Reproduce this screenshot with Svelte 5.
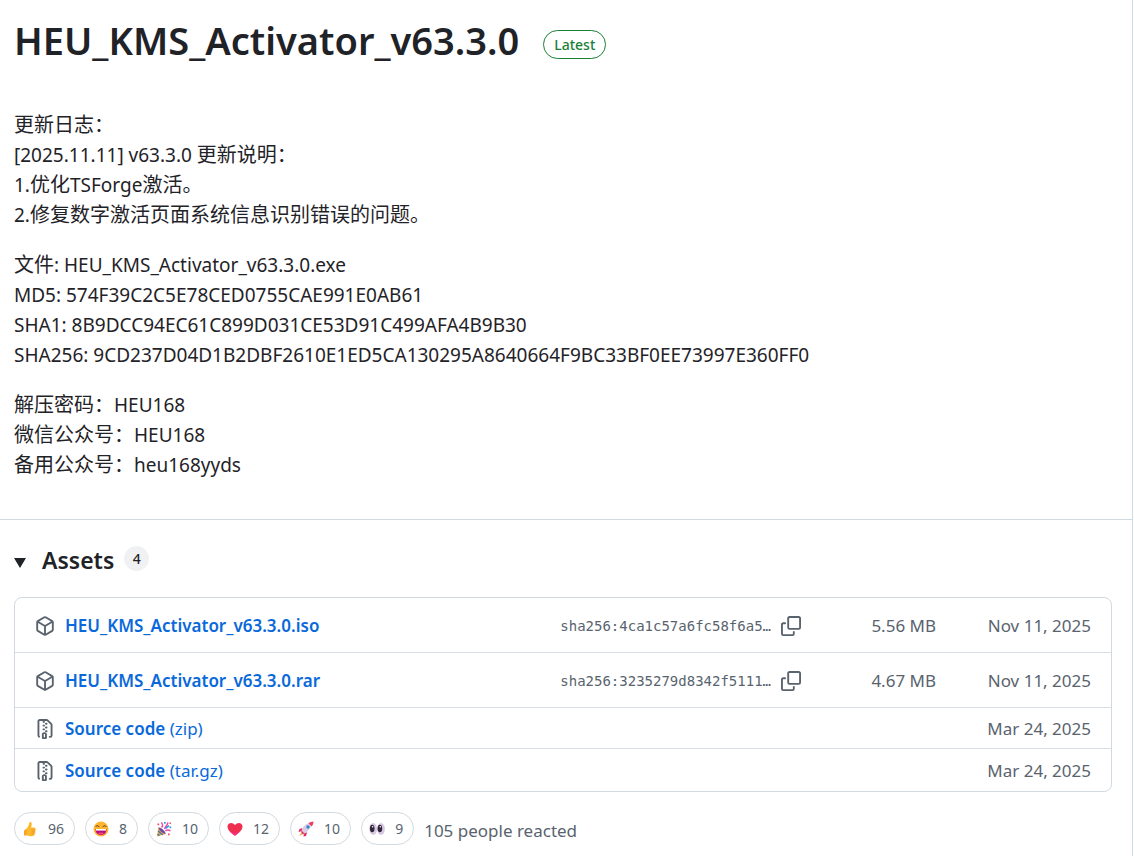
<script>
  const title = 'HEU_KMS_Activator_v63.3.0';

  // Each note is a list of lines, each line a list of text runs.
  // Latin runs are set slightly smaller than the Chinese ones.
  const notes = [
    [
      [{ zh: '更新日志：' }],
      [{ en: '[2025.11.11] v63.3.0 ' }, { zh: '更新说明：' }],
      [{ en: '1.' }, { zh: '优化' }, { en: 'TSForge' }, { zh: '激活。' }],
      [{ en: '2.' }, { zh: '修复数字激活页面系统信息识别错误的问题。' }]
    ],
    [
      [{ zh: '文件' }, { en: ': HEU_KMS_Activator_v63.3.0.exe' }],
      [{ en: 'MD5: 574F39C2C5E78CED0755CAE991E0AB61' }],
      [{ en: 'SHA1: 8B9DCC94EC61C899D031CE53D91C499AFA4B9B30' }],
      [{ en: 'SHA256: 9CD237D04D1B2DBF2610E1ED5CA130295A8640664F9BC33BF0EE73997E360FF0' }]
    ],
    [
      [{ zh: '解压密码：' }, { en: 'HEU168' }],
      [{ zh: '微信公众号：' }, { en: 'HEU168' }],
      [{ zh: '备用公众号：' }, { en: 'heu168yyds' }]
    ]
  ];

  const assets = [
    { name: 'HEU_KMS_Activator_v63.3.0.iso', sha: 'sha256:4ca1c57a6fc58f6a5…', size: '5.56 MB', date: 'Nov 11, 2025' },
    { name: 'HEU_KMS_Activator_v63.3.0.rar', sha: 'sha256:3235279d8342f5111…', size: '4.67 MB', date: 'Nov 11, 2025' },
    { name: 'Source code', ext: '(zip)', date: 'Mar 24, 2025' },
    { name: 'Source code', ext: '(tar.gz)', date: 'Mar 24, 2025' }
  ];

  const reactions = [
    { kind: 'thumbs up', count: 96 },
    { kind: 'laugh', count: 8 },
    { kind: 'hooray', count: 10 },
    { kind: 'heart', count: 12 },
    { kind: 'rocket', count: 10 },
    { kind: 'eyes', count: 9 }
  ];

  let open = $state(true);
</script>

<main class="release">
  <section class="body">
    <header>
      <h1>{title}</h1>
      <a class="latest" href="#latest">Latest</a>
    </header>

    <div class="notes">
      {#each notes as note}
        <p>
          {#each note as line}
            <span class="line">{#each line as run}{#if run.en}<span class="latin">{run.en}</span>{:else}{run.zh}{/if}{/each}</span>
          {/each}
        </p>
      {/each}
    </div>
  </section>

  <section class="footer">
    <details bind:open>
      <summary>
        <svg class="caret" class:closed={!open} width="12" height="12" viewBox="0 0 12 12"><path d="M0 1h12L6 11z" /></svg>
        <h2>Assets</h2>
        <span class="counter">4</span>
      </summary>

      <ul class="assets">
        {#each assets as asset}
          <li class:tall={asset.sha}>
            <svg class="icon" width="20" height="20" viewBox="0 0 16 16">
              {#if asset.sha}
                <path d="m8.878.392 5.25 3.045c.54.314.872.89.872 1.514v6.098a1.75 1.75 0 0 1-.872 1.514l-5.25 3.045a1.75 1.75 0 0 1-1.756 0l-5.25-3.045A1.75 1.75 0 0 1 1 11.049V4.951c0-.624.332-1.201.872-1.514L7.122.392a1.75 1.75 0 0 1 1.756 0ZM7.875 1.69l-4.63 2.685L8 7.133l4.755-2.758-4.63-2.685a.248.248 0 0 0-.25 0ZM2.5 5.677v5.372c0 .09.047.171.125.216l4.625 2.683V8.432Zm6.25 8.271 4.625-2.683a.25.25 0 0 0 .125-.216V5.677L8.75 8.432Z" />
              {:else}
                <path d="M3.5 1.75v11.5c0 .09.048.173.126.217a.75.75 0 0 1-.752 1.298A1.748 1.748 0 0 1 2 13.25V1.75C2 .784 2.784 0 3.75 0h5.586c.464 0 .909.185 1.237.513l2.914 2.914c.329.328.513.773.513 1.237v8.586A1.75 1.75 0 0 1 12.25 15h-.5a.75.75 0 0 1 0-1.5h.5a.25.25 0 0 0 .25-.25V4.664a.25.25 0 0 0-.073-.177L9.513 1.573a.25.25 0 0 0-.177-.073H7.25a.75.75 0 0 1 0 1.5h-.5a.75.75 0 0 1 0-1.5h-3a.25.25 0 0 0-.25.25Zm3.75 8.75h.5c.966 0 1.75.784 1.75 1.75v3a.75.75 0 0 1-.75.75h-2.5a.75.75 0 0 1-.75-.75v-3c0-.966.784-1.75 1.75-1.75ZM6 5.25a.75.75 0 0 1 .75-.75h.5a.75.75 0 0 1 0 1.5h-.5A.75.75 0 0 1 6 5.25Zm.75 2.25h.5a.75.75 0 0 1 0 1.5h-.5a.75.75 0 0 1 0-1.5Zm1.25-.75A.75.75 0 0 1 8.75 6h.5a.75.75 0 0 1 0 1.5h-.5A.75.75 0 0 1 8 6.75ZM8.75 3h.5a.75.75 0 0 1 0 1.5h-.5a.75.75 0 0 1 0-1.5ZM8 9.75A.75.75 0 0 1 8.75 9h.5a.75.75 0 0 1 0 1.5h-.5A.75.75 0 0 1 8 9.75Zm-1 2.5v2.25h1v-2.25a.25.25 0 0 0-.25-.25h-.5a.25.25 0 0 0-.25.25Z" />
              {/if}
            </svg>
            <a href="#download"><b>{asset.name}</b>{#if asset.ext}&nbsp;{asset.ext}{/if}</a>
            {#if asset.sha}
              <code>{asset.sha}</code>
              <button class="copy" aria-label="Copy digest of {asset.name}">
                <svg class="icon" width="20" height="20" viewBox="0 0 16 16">
                  <path d="M0 6.75C0 5.784.784 5 1.75 5h1.5a.75.75 0 0 1 0 1.5h-1.5a.25.25 0 0 0-.25.25v7.5c0 .138.112.25.25.25h7.5a.25.25 0 0 0 .25-.25v-1.5a.75.75 0 0 1 1.5 0v1.5A1.75 1.75 0 0 1 9.25 16h-7.5A1.75 1.75 0 0 1 0 14.25Z" />
                  <path d="M5 1.75C5 .784 5.784 0 6.75 0h7.5C15.216 0 16 .784 16 1.75v7.5A1.75 1.75 0 0 1 14.25 11h-7.5A1.75 1.75 0 0 1 5 9.25Zm1.75-.25a.25.25 0 0 0-.25.25v7.5c0 .138.112.25.25.25h7.5a.25.25 0 0 0 .25-.25v-7.5a.25.25 0 0 0-.25-.25Z" />
                </svg>
              </button>
              <span class="size">{asset.size}</span>
            {/if}
            <time>{asset.date}</time>
          </li>
        {/each}
      </ul>
    </details>

    <div class="reactions">
      {#each reactions as { kind, count }}
        <button class="reaction" aria-label="{kind} {count}">
          <svg width="16" height="16" viewBox="0 0 16 16">
            {#if kind === 'thumbs up'}
              <path d="M3.500 8.500C5.500 7 7 4.500 7.200 1.800 7.400.6 9.400.7 9.700 2.500c.2 1.500-.2 2.700-.7 4h3.200c1.500 0 1.700 1.600.9 2.100.9.600.7 1.800-.1 2.200.6.700.3 1.700-.5 2 .3 1-.3 2-1.500 2.100-3 .6-5.500.3-7.500-1.400z" fill="#fdb92c" />
              <path d="M2 9.500 4.500 8v6.500L2 14.500z" fill="#f9a02e" />
              <path d="M9.500 8.800h3.600M9.500 10.900h3.300M9.500 12.900h2.800" stroke="#e88a24" stroke-width=".7" fill="none" />
            {:else if kind === 'laugh'}
              <circle cx="8" cy="8" r="7.500" fill="#ffb52e" />
              <path d="M2.500 8h11c0 3.800-2.200 6-5.500 6s-5.500-2.200-5.500-6z" fill="#b5127c" />
              <path d="M3 8h10v1.600H3z" fill="#fff" />
              <path d="M5 12.500c1.500-1.300 4.500-1.300 6 0-1.500 1.300-4.500 1.300-6 0z" fill="#f74a86" />
              <path d="M2.800 5.800c.7-1.500 2.500-1.500 3.200 0M10 5.800c.7-1.500 2.500-1.500 3.200 0" stroke="#5a2d32" stroke-width="1" fill="none" />
            {:else if kind === 'hooray'}
              <path d="M1 15.500 2.500 6.500C5 7 9 10 9.500 13z" fill="#f8a62b" />
              <path d="M2.500 6.500C5 6 10 10.500 9.500 13 7 13 2.500 9 2.500 6.500z" fill="#6c4cae" />
              <path d="m2 10 4.800 4M1.500 13l2 1.800" stroke="#3d78c8" stroke-width="1.300" />
              <path d="M5.500 6.500C7 5 6.800 3 5.300 1.500M8.500 8C9.500 5.500 11 5 12 1.500M9.500 10c1.500-1.500 3.500-1 5 0" stroke="#ee4aa2" stroke-width="1.500" fill="none" />
              <path d="M8 1h1.700v1.700H8zM13.500 5.500h1.700v1.700h-1.700z" fill="#25a6e8" />
              <path d="M1.500 2.500h1.700v1.700H1.500zM12 12.500h1.700v1.700H12zM13.500 1.500H15V3h-1.500z" fill="#ef4a70" />
              <path d="m9.500 7.500 3.500-2.800" stroke="#338de8" stroke-width="1.500" />
            {:else if kind === 'heart'}
              <path d="M8 14.800C4 12 .5 9 .5 5.600.5 1.500 5.500.6 8 4c2.500-3.400 7.500-2.500 7.500 1.600C15.500 9 12 12 8 14.800z" fill="#ee2f50" />
              <path d="M1.200 7.800c2 4.700 10 6.300 13.200.8C13 11 10.500 13 8 14.800 5 12.700 2 10.400 1.200 7.800z" fill="#f92f82" />
            {:else if kind === 'rocket'}
              <path d="M4.500 7 1.500 8l-1 3 4-1zM9 11.500 8 15l-2.500.5.500-4z" fill="#e52b63" />
              <path d="M3.500 9.500C5 5 9 1.500 13 2c.5 4-2.500 8.500-7 10.800z" fill="#d8cde4" />
              <path d="M10.500 2.200C12 1 13.700.6 15.500.5c0 1.800-.5 3.500-1.800 5z" fill="#ef3c62" />
              <circle cx="10" cy="6" r="1.700" fill="#3784cf" />
              <path d="m3.500 9.500 3 3-3 .8z" fill="#dc2460" />
              <path d="m3.500 11.500 1.200 1.500-3.500 2.300z" fill="#ff9a2e" />
            {:else}
              <ellipse cx="4.200" cy="8" rx="3.900" ry="6" fill="#d9c9e4" />
              <ellipse cx="12" cy="8" rx="3.900" ry="6" fill="#d9c9e4" />
              <ellipse cx="3.200" cy="7.500" rx="2.300" ry="3.800" fill="#302638" />
              <ellipse cx="10.900" cy="7.500" rx="2.300" ry="3.800" fill="#302638" />
              <circle cx="3.600" cy="5.700" r=".8" fill="#fff" />
              <circle cx="11.300" cy="5.700" r=".8" fill="#fff" />
            {/if}
          </svg>
          <span>{count}</span>
        </button>
      {/each}
      <span class="total">105 people reacted</span>
    </div>
  </section>
</main>

<style>
  :global(body) {
    margin: 0;
    background: #fff;
  }

  .release {
    box-sizing: border-box;
    min-height: 100vh;
    margin-right: 1px;
    border-right: 1px solid #d1d9e0;
    font-family: "Noto Sans", "Noto Sans CJK SC", sans-serif;
    font-size: 17px;
    color: #1f2328;
    overflow: hidden;
  }

  .body {
    padding: 10px 20px 40px 14px;
    border-bottom: 1px solid #d1d9e0;
  }

  header {
    display: flex;
    align-items: center;
    gap: 24px;
    margin-bottom: 39px;
  }

  h1 {
    margin: 0;
    font-size: 38px;
    line-height: 60px;
    font-weight: 600;
  }

  .latest {
    margin-top: 8px;
    padding: 0 10px;
    border: 1px solid #1a7f37;
    border-radius: 20px;
    font-size: 14px;
    line-height: 27px;
    font-weight: 500;
    color: #1a7f37;
    text-decoration: none;
  }

  p {
    margin: 0 0 20px;
    font-family: "Noto Sans CJK SC", sans-serif;
    font-size: 20px;
    line-height: 30px;
  }

  p:last-child {
    margin-bottom: 0;
  }

  .line {
    display: block;
    height: 30px;
  }

  .latin {
    font-family: "Noto Sans", sans-serif;
    font-size: 19px;
    white-space: pre-wrap;
  }

  .footer {
    padding: 20px 20px 11px 14px;
  }

  summary {
    display: flex;
    align-items: center;
    height: 40px;
    list-style: none;
    cursor: pointer;
  }

  .caret {
    margin: 6px 16px 0 0;
    fill: #1f2328;
  }

  .caret.closed {
    transform: rotate(-90deg);
  }

  h2 {
    margin: 0;
    font-size: 23px;
    line-height: 38px;
    font-weight: 600;
  }

  .counter {
    min-width: 25px;
    margin: 0 0 4px 10px;
    border-radius: 13px;
    background: #eff1f3;
    font-size: 14px;
    line-height: 25px;
    font-weight: 500;
    text-align: center;
  }

  .assets {
    margin: 17px 0 20px;
    padding: 0;
    border: 1px solid #d1d9e0;
    border-radius: 8px;
    list-style: none;
  }

  li {
    box-sizing: border-box;
    display: flex;
    align-items: center;
    height: 41px;
    padding: 1px 20px 0;
    color: #59636e;
  }

  li + li {
    border-top: 1px solid #d8dee4;
  }

  li.tall {
    height: 55px;
  }

  li:first-child {
    height: 54px;
  }

  li:last-child {
    height: 43px;
  }

  .icon {
    flex: none;
    fill: #59636e;
  }

  li a {
    flex: 1;
    margin-left: 10px;
    color: #0969da;
    text-decoration: none;
  }

  li b {
    font-weight: 600;
  }

  code {
    font-family: "DejaVu Sans Mono", monospace;
    font-size: 14px;
  }

  .copy {
    display: flex;
    margin-left: 10px;
    padding: 0;
    border: 0;
    background: none;
    cursor: pointer;
  }

  .size {
    width: 135px;
    text-align: right;
  }

  time {
    width: 155px;
    text-align: right;
  }

  .reactions {
    display: flex;
    align-items: center;
    flex-wrap: wrap;
    gap: 10px;
  }

  .reaction {
    display: flex;
    align-items: center;
    gap: 10px;
    height: 33px;
    padding: 0 10px 0 7px;
    border: 1px solid #d1d9e0;
    border-radius: 17px;
    background: #fff;
    font-family: inherit;
    font-size: 14px;
    color: #59636e;
    cursor: pointer;
  }

  .total {
    padding-top: 3px;
    color: #59636e;
  }
</style>
